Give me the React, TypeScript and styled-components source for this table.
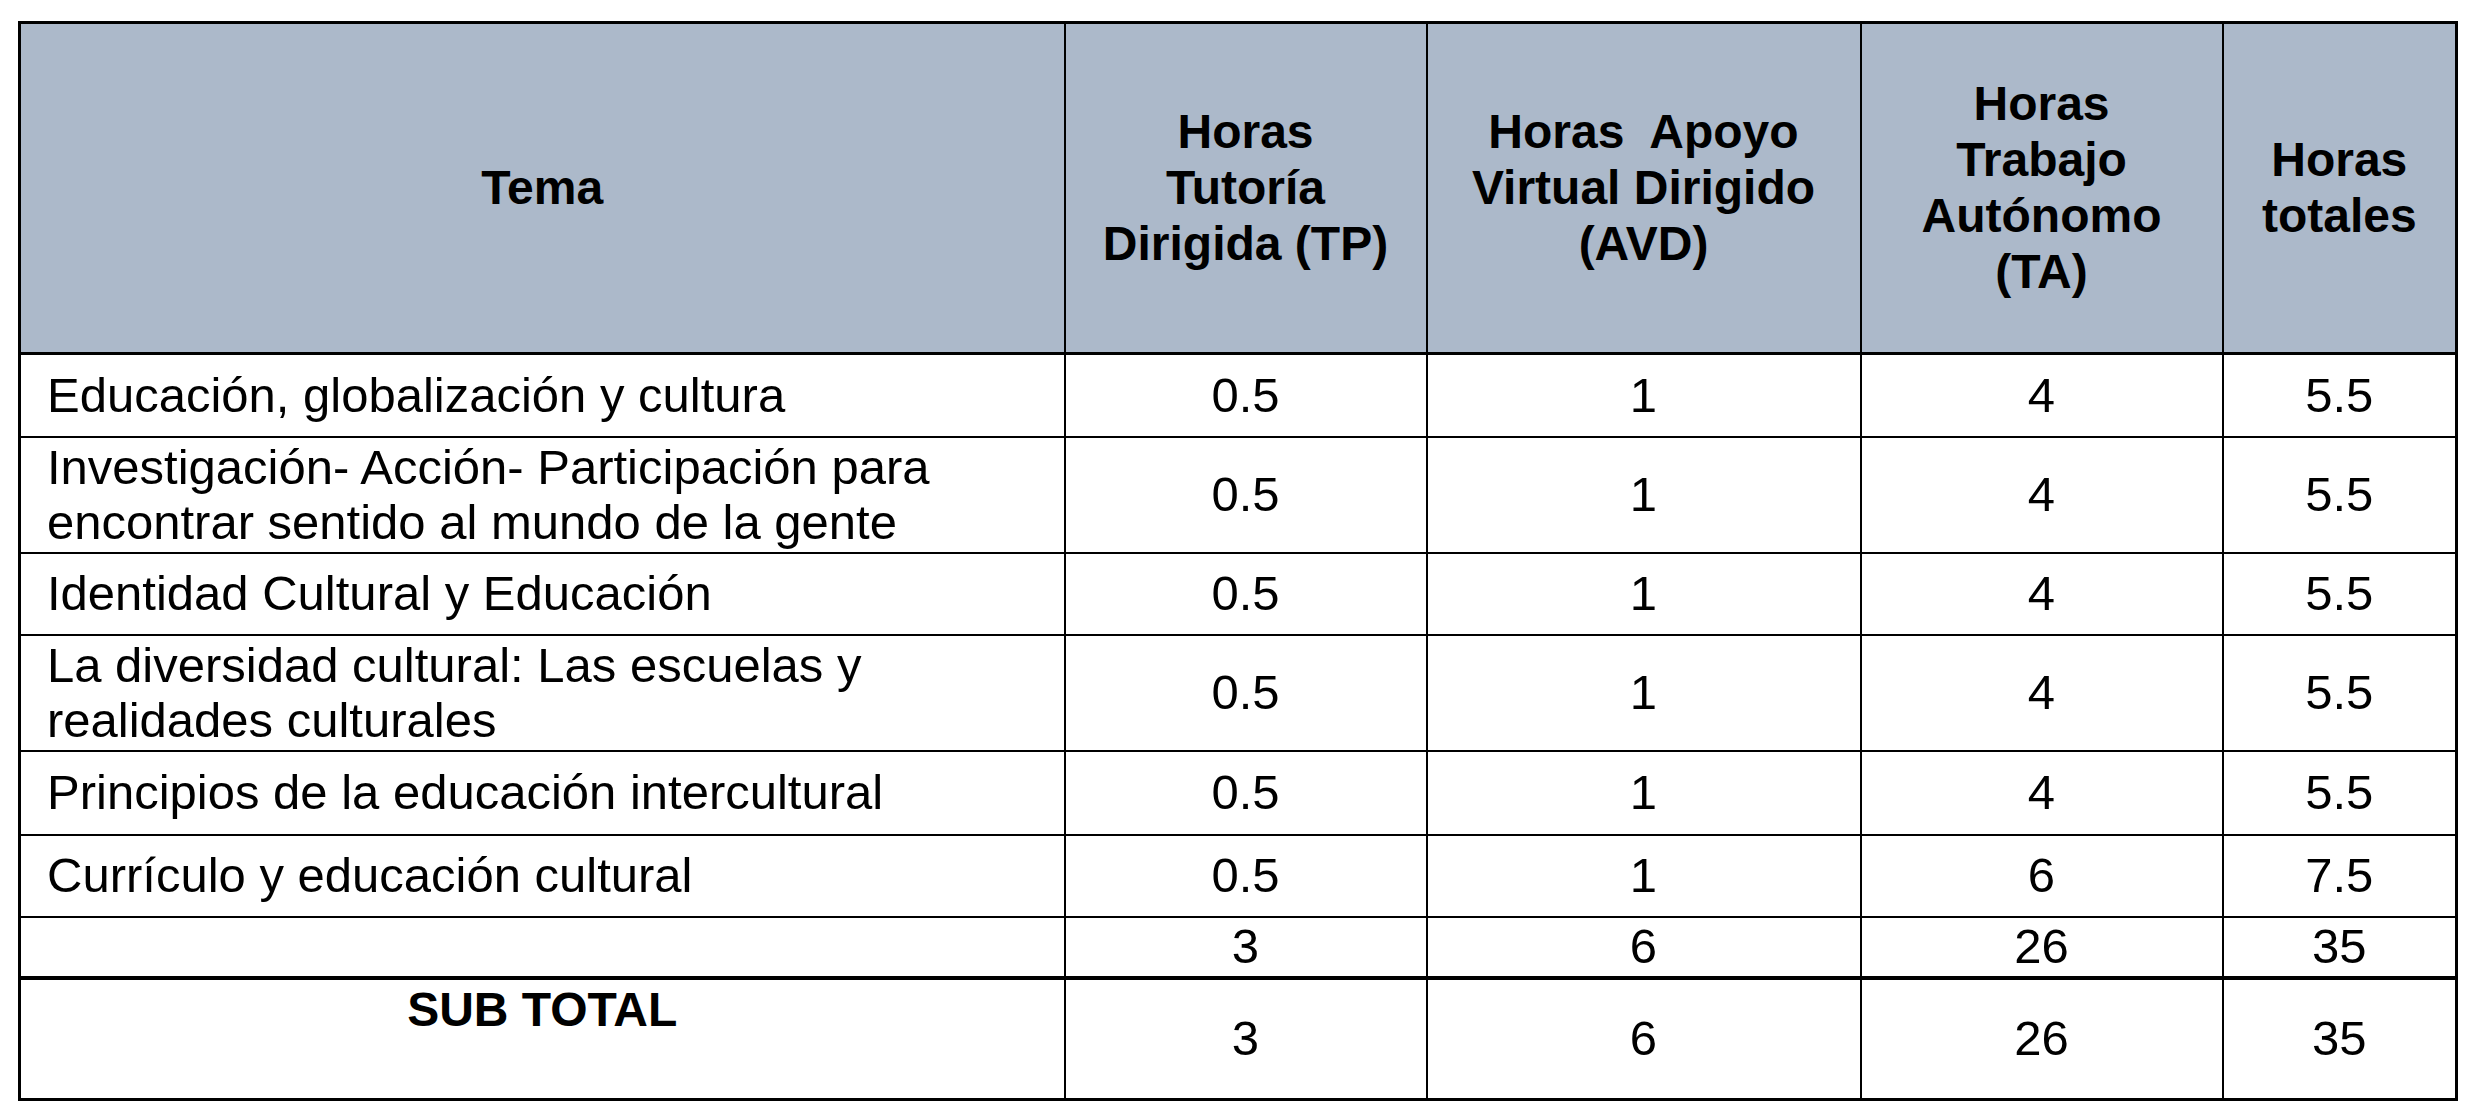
import styled, { createGlobalStyle } from 'styled-components';

interface Row {
    tema: string[];
    tp: string;
    avd: string;
    ta: string;
    total: string;
    height: number;
}

const rows: Row[] = [
    { tema: ["Educación, globalización y cultura"], tp: "0.5", avd: "1", ta: "4", total: "5.5", height: 83 },
    { tema: ["Investigación- Acción- Participación para", "encontrar sentido al mundo de la gente"], tp: "0.5", avd: "1", ta: "4", total: "5.5", height: 116 },
    { tema: ["Identidad Cultural y Educación"], tp: "0.5", avd: "1", ta: "4", total: "5.5", height: 82 },
    { tema: ["La diversidad cultural: Las escuelas y", "realidades culturales"], tp: "0.5", avd: "1", ta: "4", total: "5.5", height: 116 },
    { tema: ["Principios de la educación intercultural"], tp: "0.5", avd: "1", ta: "4", total: "5.5", height: 84 },
    { tema: ["Currículo y educación cultural"], tp: "0.5", avd: "1", ta: "6", total: "7.5", height: 82 },
];

const headers: string[][] = [
    ["Tema"],
    ["Horas", "Tutoría", "Dirigida (TP)"],
    ["Horas  Apoyo", "Virtual Dirigido", "(AVD)"],
    ["Horas", "Trabajo", "Autónomo", "(TA)"],
    ["Horas", "totales"],
];

const widths = [1045, 362, 434, 362, 234];

const Lines = ({ lines }: { lines: string[] }) => (
    <>
        {lines.map((l, i) => (
            <span key={i}>
                {i > 0 && <br />}
                {l}
            </span>
        ))}
    </>
);

export default function App() {
    return (
        <>
            <GlobalStyle />
            <Page>
                <Table>
                    <colgroup>
                        {widths.map((w, i) => <col key={i} style={{ width: w }} />)}
                    </colgroup>
                    <thead>
                        <HeadRow>
                            {headers.map((h, i) => (
                                <HeadCell key={i}><Lines lines={h} /></HeadCell>
                            ))}
                        </HeadRow>
                    </thead>
                    <tbody>
                        {rows.map((r, i) => (
                            <tr key={i} style={{ height: r.height }}>
                                <TopicCell><Lines lines={r.tema} /></TopicCell>
                                <NumCell>{r.tp}</NumCell>
                                <NumCell>{r.avd}</NumCell>
                                <NumCell>{r.ta}</NumCell>
                                <NumCell>{r.total}</NumCell>
                            </tr>
                        ))}
                        <TotalRow>
                            <TopicCell />
                            <NumCell>3</NumCell>
                            <NumCell>6</NumCell>
                            <NumCell>26</NumCell>
                            <NumCell>35</NumCell>
                        </TotalRow>
                        <SubTotalRow>
                            <SubTotalLabel>SUB TOTAL</SubTotalLabel>
                            <NumCell>3</NumCell>
                            <NumCell>6</NumCell>
                            <NumCell>26</NumCell>
                            <NumCell>35</NumCell>
                        </SubTotalRow>
                    </tbody>
                </Table>
            </Page>
        </>
    )
}

const GlobalStyle = createGlobalStyle`
    html, body {
        margin: 0;
        padding: 0;
        background: #fff;
    }
    body {
        font-family: "Liberation Sans", Arial, sans-serif;
        color: #000;
    }
`

const Page = styled.div`
    width: 2480px;
    height: 1120px;
    padding: 21px 0 0 18px;
    box-sizing: border-box;
    background: #fff;
`

const Table = styled.table`
    width: 2437px;
    table-layout: fixed;
    border-collapse: collapse;
    border: 3px solid #000;
    font-size: 49px;
    line-height: 55px;
`

const HeadRow = styled.tr`
    height: 331px;
    background: #acb9ca;
    border-bottom: 3px solid #000;
`

const HeadCell = styled.th`
    border: 2px solid #000;
    border-bottom-width: 3px;
    padding: 0 8px;
    font-size: 48px;
    line-height: 56px;
    font-weight: 700;
    text-align: center;
    vertical-align: middle;
    white-space: pre;
`

const TopicCell = styled.td`
    border: 2px solid #000;
    padding: 0 8px 0 26px;
    text-align: left;
    vertical-align: middle;
    white-space: nowrap;
`

const NumCell = styled.td`
    border: 2px solid #000;
    padding: 0;
    text-align: center;
    vertical-align: middle;
`

const TotalRow = styled.tr`
    height: 61px;
`

const SubTotalRow = styled.tr`
    height: 122px;

    td {
        border-top: 4px solid #000;
    }
`

const SubTotalLabel = styled.td`
    border: 2px solid #000;
    border-top: 4px solid #000;
    padding: 2px 0 0;
    font-size: 48px;
    font-weight: 700;
    text-align: center;
    vertical-align: top;
`
